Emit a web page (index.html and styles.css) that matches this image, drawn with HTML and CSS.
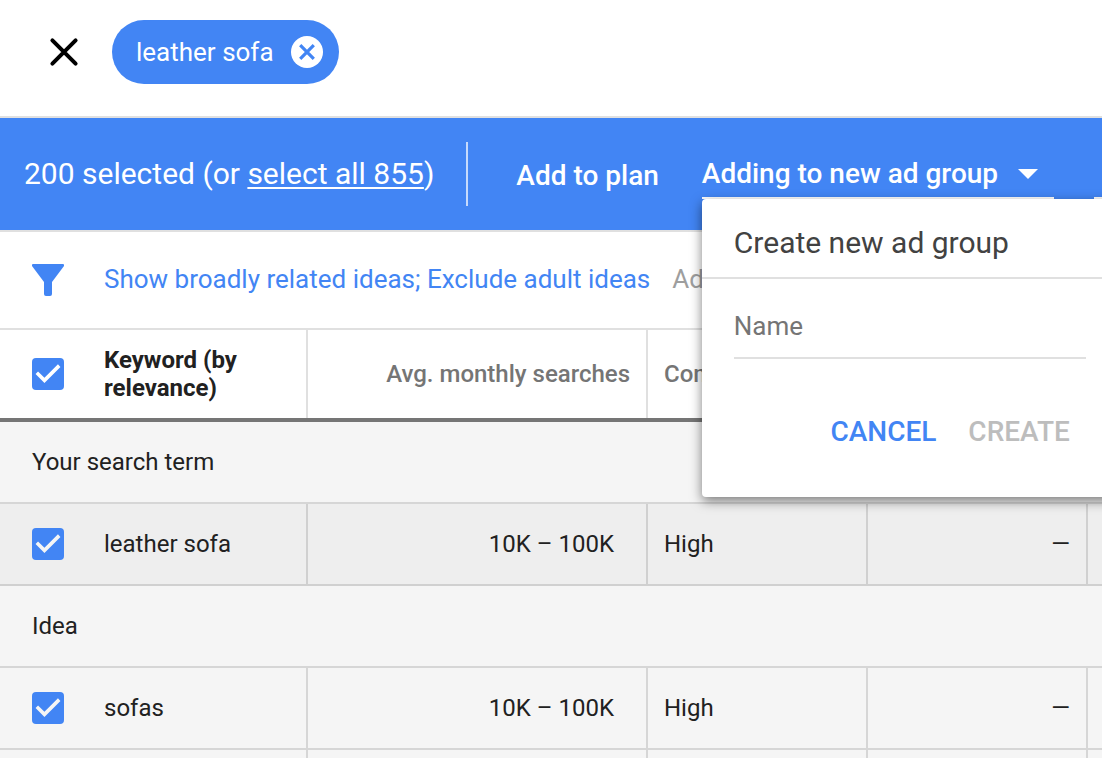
FILE: index.html
```html
<!DOCTYPE html>
<html lang="en">
<head>
    <meta charset="UTF-8">
    <meta name="viewport" content="width=device-width, initial-scale=1.0">
    <title>Keyword ideas</title>
    <link rel="stylesheet" href="styles.css">
</head>
<body>
    <header class="search-bar">
        <button class="close" aria-label="Close">
            <svg width="32" height="32" viewBox="0 0 32 32"><path d="M4.4 4.4l23.2 23.2M27.6 4.4L4.4 27.6" stroke="#000" stroke-width="4" stroke-linecap="round"/></svg>
        </button>
        <div class="chip">
            <span>leather sofa</span>
            <button class="chip-remove" aria-label="Remove leather sofa">
                <svg width="32" height="32" viewBox="0 0 32 32"><circle cx="16" cy="16" r="16" fill="#fff"/><path d="M9.2 9.2l13.6 13.6M22.8 9.2L9.2 22.8" stroke="#4285f4" stroke-width="3.2"/></svg>
            </button>
        </div>
    </header>

    <div class="action-bar">
        <p class="selected">200 selected (or <a href="#">select all 855</a>)</p>
        <button class="add-plan">Add to plan</button>
        <div class="group-menu">
            <button class="group-button" aria-haspopup="true" aria-expanded="true">
                Adding to new ad group
                <svg width="20" height="10" viewBox="0 0 20 10"><path d="M0 0h20L10 10z" fill="#fff"/></svg>
            </button>
            <form class="popup">
                <h2>Create new ad group</h2>
                <div class="popup-body">
                    <input type="text" class="name" placeholder="Name" aria-label="Name">
                    <div class="popup-actions">
                        <button type="button" class="cancel">CANCEL</button>
                        <button type="submit" class="create" disabled>CREATE</button>
                    </div>
                </div>
            </form>
        </div>
        <button class="match-button" aria-label="Match type"></button>
    </div>

    <div class="filter-bar">
        <svg width="32" height="32" viewBox="0 0 32 32"><path d="M1 0h30q1 0 1 1v1L20 18v12q0 2-2 2h-4q-2 0-2-2V18L0 2V1q0-1 1-1z" fill="#4285f4"/></svg>
        <a href="#">Show broadly related ideas; Exclude adult ideas</a>
        <input type="text" placeholder="Add filter" aria-label="Add filter">
    </div>

    <table class="keywords">
        <colgroup>
            <col class="col-keyword">
            <col class="col-searches">
            <col class="col-small">
            <col class="col-small">
            <col>
        </colgroup>
        <thead>
            <tr>
                <th>
                    <label class="keyword"><input type="checkbox" checked><span>Keyword (by relevance)</span></label>
                </th>
                <th class="number">Avg. monthly searches</th>
                <th>Competition</th>
                <th></th>
                <th></th>
            </tr>
        </thead>
        <tbody>
            <tr class="section">
                <td colspan="5">Your search term</td>
            </tr>
            <tr class="term">
                <td><label class="keyword"><input type="checkbox" checked><span>leather sofa</span></label></td>
                <td class="searches">10K – 100K</td>
                <td>High</td>
                <td class="number">—</td>
                <td></td>
            </tr>
            <tr class="section">
                <td colspan="5">Idea</td>
            </tr>
            <tr>
                <td><label class="keyword"><input type="checkbox" checked><span>sofas</span></label></td>
                <td class="searches">10K – 100K</td>
                <td>High</td>
                <td class="number">—</td>
                <td></td>
            </tr>
            <tr>
                <td></td>
                <td></td>
                <td></td>
                <td></td>
                <td></td>
            </tr>
        </tbody>
    </table>
</body>
</html>
```

FILE: styles.css
```css
* {
    box-sizing: border-box;
}

body {
    margin: 0;
    height: 100vh;
    overflow: hidden;
    background-color: #fff;
    color: #212121;
    font-family: Roboto, sans-serif;
    font-size: 24px;
    line-height: 28px;
}

button, input {
    margin: 0;
    padding: 0;
    border: 0;
    background: none;
    font: inherit;
    outline: none;
}

button {
    cursor: pointer;
}

svg {
    display: block;
    flex: none;
}

/* search term */
.search-bar {
    display: flex;
    gap: 32px;
    padding: 20px 48px 32px;
    border-bottom: 2px solid #e0e0e0;
}

.chip {
    display: flex;
    align-items: center;
    gap: 17px;
    height: 64px;
    padding: 0 16px 0 24px;
    border-radius: 32px;
    background-color: #4285f4;
    color: #fff;
    font-size: 26px;
}

/* blue bar */
.action-bar {
    display: flex;
    align-items: center;
    height: 114px;
    padding-left: 24px;
    border-bottom: 2px solid #e0e0e0;
    background-color: #4285f4;
    color: #fff;
    white-space: nowrap;
}

.selected {
    margin: 0;
    padding-right: 32px;
    border-right: 2px solid #c6dafc;
    font-size: 30px;
    line-height: 64px;
}

.selected a {
    color: #fff;
    text-underline-offset: 3px;
    text-decoration-thickness: 2px;
}

.add-plan, .group-button {
    color: #fff;
    font-size: 28px;
    font-weight: 500;
}

.add-plan {
    margin: 0 43px 0 48px;
    padding-top: 4px;
}

.group-menu {
    position: relative;
    flex: none;
    width: 352px;
}

.group-button {
    display: flex;
    align-items: center;
    gap: 20px;
    width: 100%;
    height: 50px;
    padding-top: 2px;
    border-bottom: 2px solid #fff;
}

.match-button {
    flex: none;
    width: 120px;
    height: 50px;
    margin-left: 40px;
    border-bottom: 2px solid #fff;
}

.popup {
    position: absolute;
    top: 100%;
    left: 0;
    z-index: 10;
    width: 416px;
    border-radius: 4px;
    background-color: #fff;
    box-shadow: 0 4px 12px rgba(0, 0, 0, 0.5);
}

.popup h2 {
    margin: 0;
    padding: 28px 32px 18px;
    border-bottom: 2px solid #e0e0e0;
    color: #424242;
    font-size: 30px;
    font-weight: 400;
    line-height: 32px;
}

.popup-body {
    padding: 24px 32px 40px;
}

.name {
    width: 100%;
    height: 56px;
    padding-bottom: 8px;
    border-bottom: 2px solid #e0e0e0;
    font-size: 26px;
}

.name::placeholder {
    color: #757575;
}

.popup-actions {
    display: flex;
    justify-content: flex-end;
    gap: 32px;
    padding: 48px 16px 0;
    font-size: 28px;
    font-weight: 500;
    line-height: 50px;
}

.cancel {
    color: #4285f4;
}

.create {
    color: #bdbdbd;
}

/* filters */
.filter-bar {
    display: flex;
    align-items: center;
    height: 98px;
    padding-left: 32px;
    border-bottom: 2px solid #e0e0e0;
    font-size: 26px;
    white-space: nowrap;
}

.filter-bar a, .filter-bar input {
    padding-bottom: 2px;
}

.filter-bar a {
    margin: 0 22px 0 40px;
    color: #4285f4;
    text-decoration: none;
}

.filter-bar input::placeholder {
    color: #9e9e9e;
}

/* table */
.keywords {
    width: 100%;
    table-layout: fixed;
    border-spacing: 0;
}

.col-keyword {
    width: 308px;
}

.col-searches {
    width: 340px;
}

.col-small {
    width: 220px;
}

th, td {
    padding: 0 16px;
    text-align: left;
}

th {
    height: 88px;
    border-right: 2px solid #e0e0e0;
    color: #757575;
    font-weight: 500;
}

td {
    height: 82px;
    border-right: 2px solid #d6d6d6;
    border-bottom: 2px solid #d6d6d6;
    background-color: #f5f5f5;
}

tbody tr:first-child td {
    height: 86px;
    border-top: 4px solid #757575;
}

th:first-child, td:first-child {
    padding-left: 32px;
}

th:first-child {
    color: #212121;
    font-weight: 700;
}

th:last-child, td:last-child {
    padding: 0;
    border-right: 0;
}

.section td:last-child {
    padding-left: 32px;
}

.term td {
    border-color: #d0d0d0;
    background-color: #eee;
}

.number {
    text-align: right;
}

.searches {
    padding-right: 32px;
    text-align: right;
}

.keyword {
    display: flex;
    align-items: center;
    gap: 40px;
}

.keyword input {
    appearance: none;
    flex: none;
    width: 32px;
    height: 32px;
    border-radius: 4px;
    background-color: #4285f4;
}

.keyword input:checked::before {
    content: "";
    display: block;
    width: 32px;
    height: 32px;
    background-color: #fff;
    clip-path: polygon(38.9% 77.8%, 11.1% 50%, 18.9% 42.2%, 38.9% 62.1%, 81.1% 19.9%, 88.9% 27.8%);
}

td .keyword input:checked::before {
    background-color: #f5f5f5;
}
```
